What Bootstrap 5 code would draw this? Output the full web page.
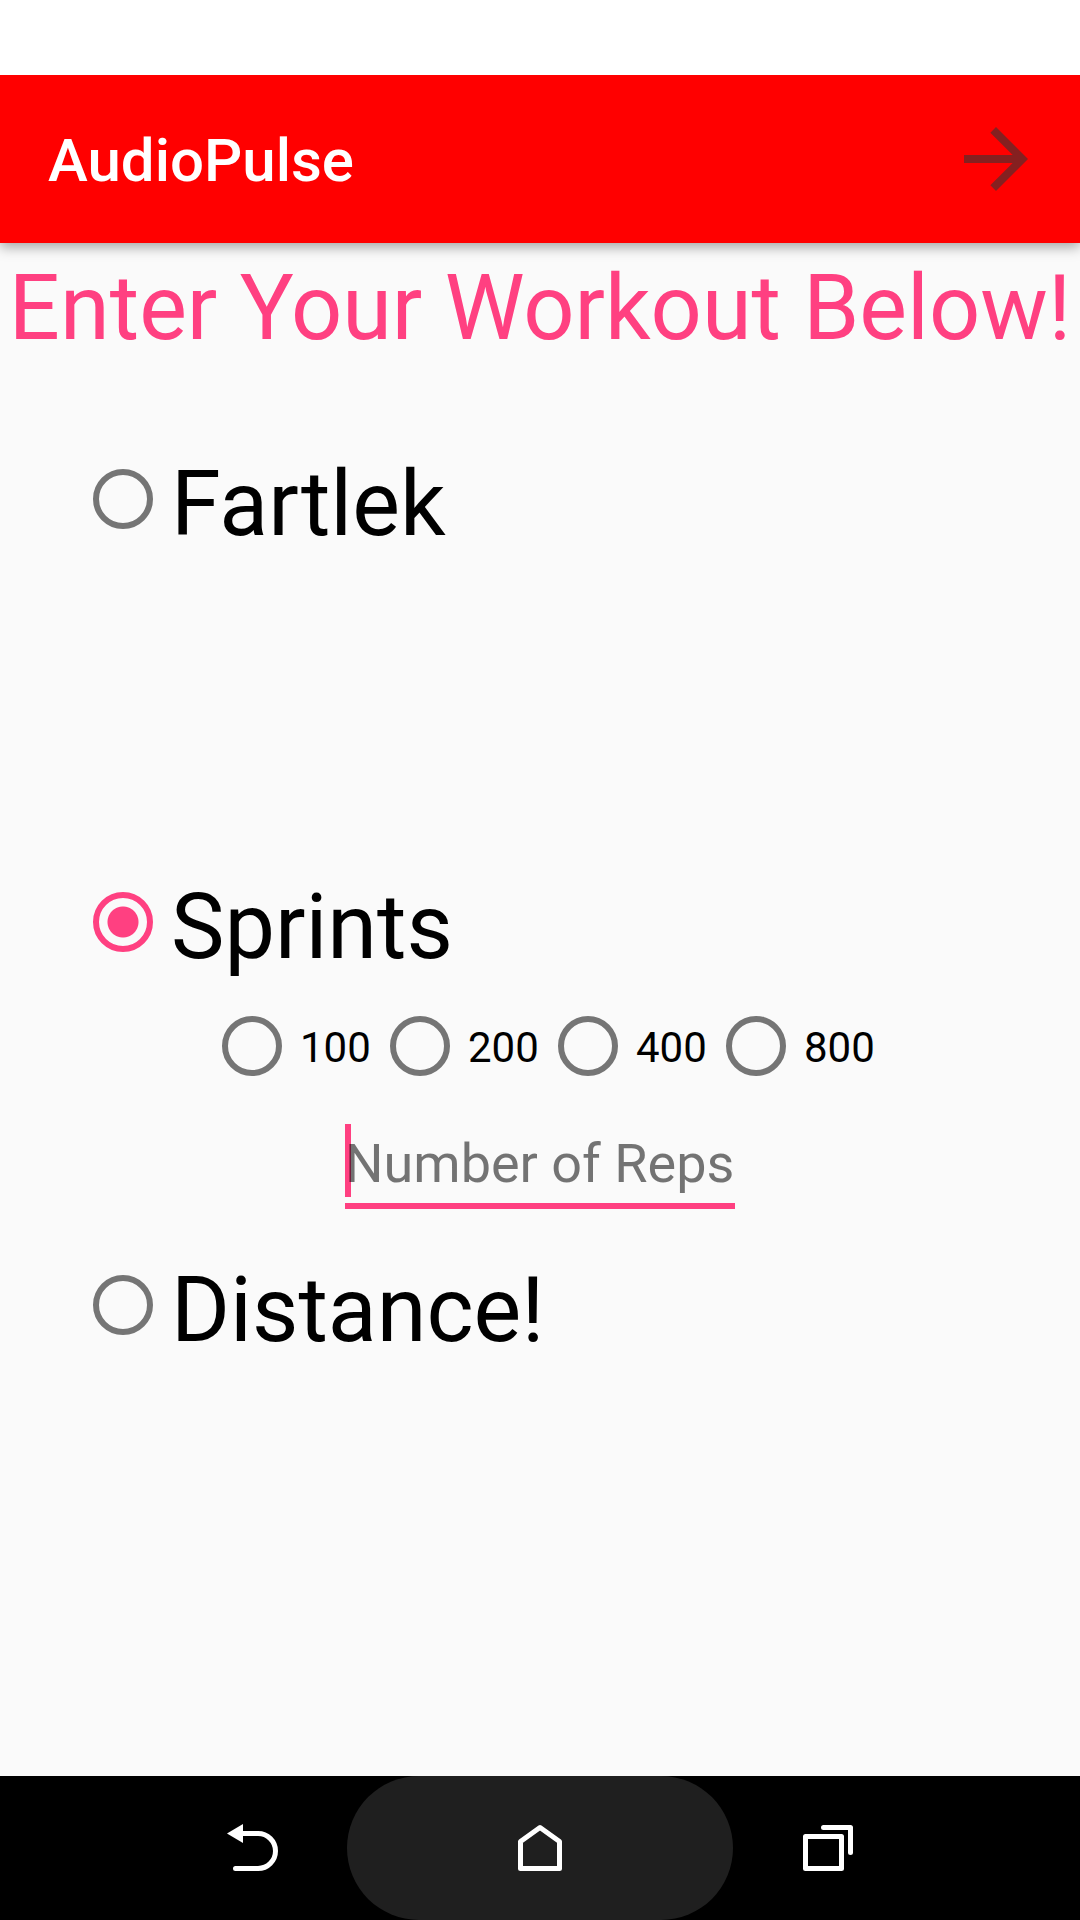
<!DOCTYPE html>
<html lang="en">
<head>
<meta charset="utf-8">
<meta name="viewport" content="width=device-width, initial-scale=1">
<title>AudioPulse</title>
<link rel="stylesheet" href="https://cdn.jsdelivr.net/npm/bootstrap@5.3.0/dist/css/bootstrap.min.css">
<style>
  :root { --accent: #ff4081; --hint: #757575; }
  body { font-family: Roboto, "Noto Sans", sans-serif; background: #fafafa; color: #000; }
  .status-strip { height: 75px; z-index: 2; }
  .app-bar { min-height: 168px; padding: 0 36px 0 48px; background: #f00; box-shadow: 0 4px 12px rgba(0, 0, 0, .35); z-index: 1; }
  .app-title { font-size: 60px; line-height: 72px; font-weight: 500; padding: 4px 0 0; margin: 0; }
  .next-btn { color: #852020; }
  .display-text { font-size: 90px; line-height: 108px; font-weight: 400; }
  .page-heading { color: var(--accent); padding-top: 12px; margin-bottom: 88px; }
  .workout-form { padding-bottom: 48px; }
  .workout-option { margin-left: 75px; }
  .option-gap { margin-bottom: 315px; }
  .workout-radio.form-check-input {
    width: 60px; height: 60px; margin: 18px; flex: none; float: none;
    border: 6px solid var(--hint); background: none; box-shadow: none;
  }
  .workout-radio.form-check-input:checked {
    border-color: var(--accent);
    background: radial-gradient(circle, var(--accent) 15px, transparent 16px);
  }
  .distances { margin: 16px 0 34px; }
  .distance-text { width: 72px; font-size: 42px; line-height: 50px; padding-top: 3px; }
  .reps-field { width: 390px; margin-bottom: 48px; }
  .reps-field .form-control {
    font-size: 54px; line-height: 70px; height: 81px; padding: 0 0 5px; color: #000;
    border: 0; border-bottom: 6px solid var(--accent); border-radius: 0;
    background: transparent; box-shadow: none; caret-color: transparent;
  }
  .reps-field .form-control::placeholder { color: rgba(0, 0, 0, .54); opacity: 1; }
  .text-cursor { width: 6px; height: 73px; top: -4px; left: 0; background: var(--accent); }
  .system-nav { height: 144px; padding: 0 10%; background: #000; }
  .nav-key { flex: 1; color: #fff; }
  .home-key::before {
    content: ""; position: absolute; top: 0; bottom: 0; left: -17%; right: -17%;
    border-radius: 72px; background: #1f1f1f;
  }
</style>
<script src="https://cdn.jsdelivr.net/npm/bootstrap@5.3.0/dist/js/bootstrap.bundle.min.js"></script>
</head>
<body>
<div class="d-flex flex-column min-vh-100 overflow-hidden">
  <div class="status-strip bg-white position-relative"></div>
  <header class="app-bar d-flex align-items-center justify-content-between position-relative">
    <h1 class="app-title text-white">AudioPulse</h1>
    <button type="button" class="next-btn btn border-0 p-0" aria-label="Next">
      <svg class="d-block" width="96" height="96" viewBox="0 0 24 24" fill="currentColor"><path d="M12 4l-1.41 1.41L16.17 11H4v2h12.17l-5.58 5.59L12 20l8-8z"/></svg>
    </button>
  </header>

  <main class="flex-grow-1">
    <h2 class="page-heading display-text text-center text-nowrap">Enter Your Workout Below!</h2>
    <form class="workout-form">
      <div class="workout-option option-gap d-flex align-items-start">
        <input class="workout-radio form-check-input" type="radio" name="workout" id="fartlek">
        <label class="display-text" for="fartlek">Fartlek</label>
      </div>

      <div class="workout-option d-flex align-items-start">
        <input class="workout-radio form-check-input" type="radio" name="workout" id="sprints" checked>
        <label class="display-text" for="sprints">Sprints</label>
      </div>
      <div class="distances d-flex justify-content-center">
        <div class="d-flex align-items-center">
          <input class="workout-radio form-check-input" type="radio" name="distance" id="d100">
          <label class="distance-text" for="d100">100</label>
        </div>
        <div class="d-flex align-items-center">
          <input class="workout-radio form-check-input" type="radio" name="distance" id="d200">
          <label class="distance-text" for="d200">200</label>
        </div>
        <div class="d-flex align-items-center">
          <input class="workout-radio form-check-input" type="radio" name="distance" id="d400">
          <label class="distance-text" for="d400">400</label>
        </div>
        <div class="d-flex align-items-center">
          <input class="workout-radio form-check-input" type="radio" name="distance" id="d800">
          <label class="distance-text" for="d800">800</label>
        </div>
      </div>
      <div class="reps-field position-relative mx-auto">
        <span class="text-cursor position-absolute"></span>
        <input class="form-control position-relative" type="text" inputmode="numeric" id="reps" placeholder="Number of Reps" aria-label="Number of Reps">
      </div>

      <div class="workout-option d-flex align-items-start">
        <input class="workout-radio form-check-input" type="radio" name="workout" id="distance">
        <label class="display-text" for="distance">Distance!</label>
      </div>
    </form>
  </main>

  <nav class="system-nav d-flex" aria-label="System">
    <button type="button" class="nav-key btn border-0 p-0" aria-label="Back">
      <svg width="72" height="72" viewBox="0 0 72 72" fill="none" stroke="#fff" stroke-width="5" stroke-linecap="round"><path d="M11 21.5 27 12V31z" fill="#fff" stroke="none"/><path d="M25 21.5H42a17.5 17.5 0 0 1 0 35H19.5"/></svg>
    </button>
    <button type="button" class="nav-key home-key btn border-0 p-0 position-relative" aria-label="Home">
      <svg class="position-relative" width="72" height="72" viewBox="0 0 72 72" fill="none" stroke="#fff" stroke-width="5" stroke-linejoin="round"><path d="M16.5 29.5 36 15.5 55.5 29.5V56.5H16.5z"/></svg>
    </button>
    <button type="button" class="nav-key btn border-0 p-0" aria-label="Recent apps">
      <svg width="72" height="72" viewBox="0 0 72 72" fill="none" stroke="#fff" stroke-width="5" stroke-linecap="round" stroke-linejoin="round"><path d="M13.5 24.5H49.5V56.5H13.5zM31.5 15.5H58.5V40.5"/></svg>
    </button>
  </nav>
</div>
</body>
</html>
